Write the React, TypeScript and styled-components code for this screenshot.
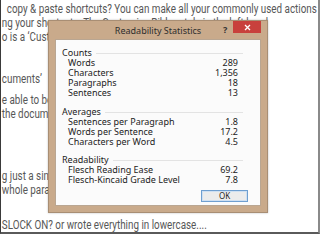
import styled, { createGlobalStyle } from 'styled-components';

const GlobalStyle = createGlobalStyle`
  html, body {
    margin: 0;
    padding: 0;
    background: #ffffff;
  }
  body {
    overflow: hidden;
  }
`;

type Stat = { label: string; value: string };
type Section = { title: string; gap: number; stats: Stat[] };

const sections: Section[] = [
  {
    title: 'Counts',
    gap: 0,
    stats: [
      { label: 'Words', value: '289' },
      { label: 'Characters', value: '1,356' },
      { label: 'Paragraphs', value: '18' },
      { label: 'Sentences', value: '13' },
    ],
  },
  {
    title: 'Averages',
    gap: 9,
    stats: [
      { label: 'Sentences per Paragraph', value: '1.8' },
      { label: 'Words per Sentence', value: '17.2' },
      { label: 'Characters per Word', value: '4.5' },
    ],
  },
  {
    title: 'Readability',
    gap: 8,
    stats: [
      { label: 'Flesch Reading Ease', value: '69.2' },
      { label: 'Flesch-Kincaid Grade Level', value: '7.8' },
    ],
  },
];

const docLines: { text: string; gap: number; indent?: number }[] = [
  { text: 'copy & paste shortcuts? You can make all your commonly used actions', gap: 2, indent: 6 },
  { text: 'ng your shortcuts. The Customize Ribbon tab, in the left-hand', gap: 0 },
  { text: 'o is a \u2018Customize\u2019 button', gap: 0 },
  { text: 'cuments\u2019', gap: 28 },
  { text: 'e able to be quickly accessed in the process. Go to File', gap: 7 },
  { text: 'the document', gap: 0 },
  { text: 'g just a single word, just double click the mouse', gap: 48 },
  { text: 'whole paragraph, just triple click a whole paragraph', gap: 0 },
  { text: 'SLOCK ON? or wrote everything in lowercase....', gap: 21 },
];

export default function App() {
  return (
    <>
      <GlobalStyle />
      <Page>
        <Doc>
          {docLines.map((line, i) => (
            <DocLine key={i} $gap={line.gap} $indent={line.indent ?? 0}>
              {line.text}
            </DocLine>
          ))}
        </Doc>
        <Dialog>
          <TitleBar>
            <Title>Readability Statistics</Title>
            <Help>?</Help>
            <Close>
              <svg width="7" height="7" viewBox="0 0 7 7">
                <path d="M1 1 L6 6 M6 1 L1 6" stroke="#fff" strokeWidth="1.3" />
              </svg>
            </Close>
          </TitleBar>
          <Panel>
            {sections.map((section) => (
              <Group key={section.title} $gap={section.gap}>
                <Heading>
                  <span>{section.title}</span>
                  <Rule />
                </Heading>
                {section.stats.map((stat) => (
                  <Row key={stat.label}>
                    <span>{stat.label}</span>
                    <span>{stat.value}</span>
                  </Row>
                ))}
              </Group>
            ))}
            <Footer>
              <OkButton>OK</OkButton>
            </Footer>
          </Panel>
        </Dialog>
      </Page>
    </>
  );
}

const Page = styled.div`
  position: relative;
  width: 320px;
  height: 234px;
  box-sizing: border-box;
  background: #ffffff;
  border-left: 1px solid #3a3a3a;
  border-right: 2px solid #8a8a8a;
  border-bottom: 2px solid #5a5a5a;
  overflow: hidden;
`;

// the document font in the shot is a narrow grotesque, so squeeze Roboto
const Doc = styled.div`
  display: flex;
  flex-direction: column;
  width: 420px;
  padding: 0 0 0 1px;
  font-family: Roboto, 'Liberation Sans', sans-serif;
  font-size: 12px;
  line-height: 14px;
  color: #575757;
  transform: scaleX(0.82);
  transform-origin: 0 0;
`;

const DocLine = styled.div<{ $gap: number; $indent: number }>`
  margin-top: ${({ $gap }) => $gap}px;
  padding-left: ${({ $indent }) => $indent}px;
  white-space: nowrap;
`;

const Dialog = styled.div`
  position: absolute;
  left: 47px;
  top: 20px;
  width: 220px;
  height: 193px;
  box-sizing: border-box;
  display: flex;
  flex-direction: column;
  background: #c9aa8b;
  border: 1px solid #a88e74;
  box-shadow: 0 0 2px rgba(0, 0, 0, 0.25);
  font-family: 'Noto Sans', 'Open Sans', sans-serif;
`;

const TitleBar = styled.div`
  height: 18px;
  display: flex;
  align-items: flex-start;
`;

const Title = styled.div`
  flex: 1;
  text-align: center;
  padding-left: 44px;
  font-size: 9px;
  line-height: 19px;
  color: #2e2e2e;
`;

const Help = styled.div`
  width: 10px;
  font-size: 9px;
  font-weight: 700;
  line-height: 18px;
  color: #333;
`;

const Close = styled.div`
  width: 28px;
  height: 12px;
  margin: 0 6px 0 0;
  background: #c8403c;
  display: flex;
  align-items: center;
  justify-content: center;
`;

const Panel = styled.div`
  flex: 1;
  margin: 0 6px 6px;
  padding: 8px 22px 0 6px;
  background: #fbfbfb;
  border: 1px solid #b9a692;
  display: flex;
  flex-direction: column;
  font-size: 9px;
  color: #222222;
`;

const Group = styled.div<{ $gap: number }>`
  margin-top: ${({ $gap }) => $gap}px;
`;

const Heading = styled.div`
  display: flex;
  align-items: center;
  gap: 4px;
  height: 10px;
  line-height: 10px;
  margin-right: -5px;
`;

const Rule = styled.div`
  flex: 1;
  height: 1px;
  background: #e3e3e3;
`;

const Row = styled.div`
  display: flex;
  justify-content: space-between;
  height: 10px;
  line-height: 10px;
  padding-left: 6px;
`;

const Footer = styled.div`
  display: flex;
  justify-content: flex-end;
  margin-top: 5px;
`;

const OkButton = styled.div`
  width: 47px;
  height: 12px;
  margin-right: -10px;
  box-sizing: border-box;
  border: 1px solid #6f9fd0;
  outline: 1px solid #cfe0f2;
  outline-offset: -2px;
  background: #ececec;
  text-align: center;
  font-size: 8px;
  line-height: 10px;
  color: #1e1e1e;
`;
